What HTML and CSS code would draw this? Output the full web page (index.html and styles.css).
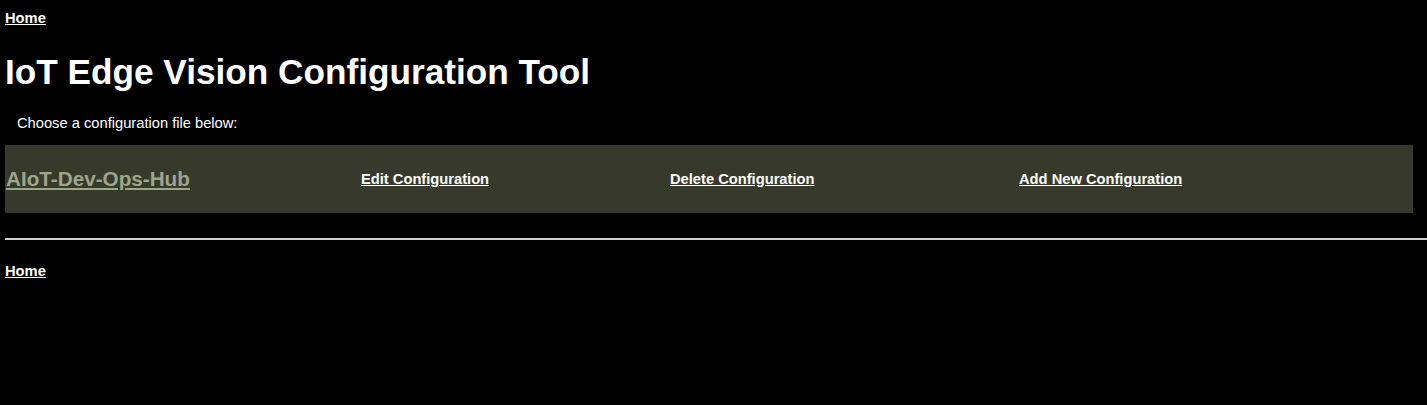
FILE: index.html
```html
<!DOCTYPE html>
<html>
<head>
<meta charset="utf-8">
<title>IoT Edge Vision Configuration Tool</title>
<link rel="stylesheet" href="styles.css">
</head>
<body>
<nav class="nav"><a href="#">Home</a></nav>
<h1 class="title">IoT Edge Vision Configuration Tool</h1>
<p class="intro">Choose a configuration file below:</p>
<div class="panel">
  <div class="cell cell-name"><a class="name" href="#">AIoT-Dev-Ops-Hub</a></div>
  <div class="cell cell-edit"><a href="#">Edit Configuration</a></div>
  <div class="cell cell-delete"><a href="#">Delete Configuration</a></div>
  <div class="cell cell-add"><a href="#">Add New Configuration</a></div>
</div>
<hr class="rule">
<nav class="nav nav-bottom"><a href="#">Home</a></nav>
</body>
</html>
```
FILE: styles.css
```css
html, body {
  background: #000;
}
body {
  margin: 0;
  padding: 0 0 0 5px;
  color: #fff;
  font-family: "Liberation Sans", Arial, sans-serif;
  font-size: 14.7px;
}
a {
  color: #fff;
  font-weight: bold;
}
.nav {
  padding-top: 10px;
  line-height: 16px;
}
.title {
  margin: 26px 0 0 0;
  font-size: 35.2px;
  line-height: 40px;
  font-weight: bold;
}
.intro {
  margin: 23px 0 0 12px;
  line-height: 16px;
}
.panel {
  margin-top: 14px;
  width: 1408px;
  height: 68px;
  background: #373a2a;
  display: grid;
  grid-template-columns: 356px 309px 349px 1fr;
  align-items: center;
}
.cell-name {
  padding-left: 1px;
}
.name {
  color: #9ea68a;
  font-size: 20.7px;
}
.rule {
  margin: 25px 0 0 0;
  border: 0;
  height: 2px;
  background: #d0d0d0;
}
.nav-bottom {
  padding-top: 23px;
}
```
